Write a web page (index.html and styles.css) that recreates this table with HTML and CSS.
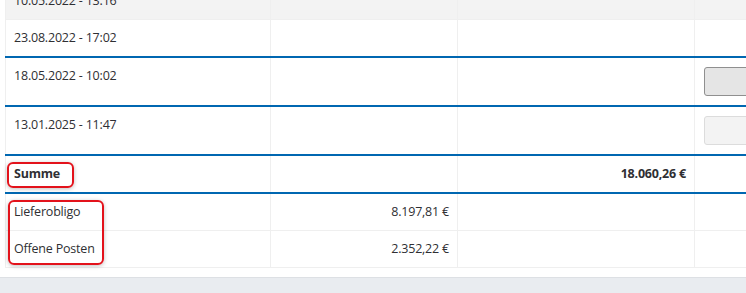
FILE: index.html
```html
<!DOCTYPE html>
<html lang="de">
<head>
    <meta charset="UTF-8">
    <meta name="viewport" content="width=device-width, initial-scale=1.0">
    <title>Bestellungen</title>
    <link rel="stylesheet" href="styles.css">
</head>
<body>
    <div class="panel">
        <table class="orders">
            <colgroup>
                <col class="col-date">
                <col class="col-amount">
                <col class="col-sum">
                <col class="col-action">
            </colgroup>
            <tr class="row-muted">
                <td>10.05.2022 - 13:16</td>
                <td></td>
                <td></td>
                <td></td>
            </tr>
            <tr class="row-group">
                <td>23.08.2022 - 17:02</td>
                <td></td>
                <td></td>
                <td></td>
            </tr>
            <tr class="row-group">
                <td>18.05.2022 - 10:02</td>
                <td></td>
                <td></td>
                <td><button class="btn">&nbsp;</button></td>
            </tr>
            <tr class="row-group">
                <td>13.01.2025 - 11:47</td>
                <td></td>
                <td></td>
                <td><button class="btn" disabled>&nbsp;</button></td>
            </tr>
            <tr class="row-group row-total">
                <td>Summe</td>
                <td></td>
                <td class="num">18.060,26 €</td>
                <td></td>
            </tr>
            <tr>
                <td>Lieferobligo</td>
                <td class="num">8.197,81 €</td>
                <td></td>
                <td></td>
            </tr>
            <tr>
                <td>Offene Posten</td>
                <td class="num">2.352,22 €</td>
                <td></td>
                <td></td>
            </tr>
        </table>

        <!-- markierungen -->
        <div class="mark mark-total"></div>
        <div class="mark mark-open"></div>
    </div>
    <div class="footer"></div>
</body>
</html>
```

FILE: styles.css
```css
body {
    margin: 0;
    font-family: "Open Sans", Lato, sans-serif;
    font-size: 12.5px;
    color: #2f2f33;
    background-color: #fff;
    overflow: hidden;
}
.panel {
    position: relative;
    padding: 0 0 9px 5px;
    overflow: hidden;
}
.orders {
    width: 900px;
    margin-top: -18px;
    border-collapse: collapse;
    table-layout: fixed;
}
.col-date {
    width: 265px;
}
.col-amount {
    width: 187px;
}
.col-sum {
    width: 237px;
}
.orders td {
    padding: 9px 8px;
    line-height: 18px;
    vertical-align: top;
    border: 1px solid #efefef;
    white-space: nowrap;
    letter-spacing: -0.2px;
}
.row-muted td {
    background-color: #f3f3f3;
}
.row-group td {
    border-bottom: 2px solid #0067b1;
}
.row-total td {
    font-weight: bold;
}
.row-total + tr td {
    border-top: 2px solid #0067b1;
}
.num {
    text-align: right;
}
.btn {
    display: block;
    width: 110px;
    height: 29px;
    margin-left: 1px;
    background-color: #e5e5e5;
    border: 1px solid #8f8f8f;
    border-radius: 3px;
}
.btn:disabled {
    background-color: #f3f3f3;
    border-color: #dcdcdc;
}
.mark {
    position: absolute;
    border: 2px solid #e3121b;
    border-radius: 6px;
    box-shadow: 0 1px 4px rgba(0, 0, 0, 0.25);
    box-sizing: border-box;
}
.mark-total {
    left: 7px;
    top: 162px;
    width: 67px;
    height: 26px;
}
.mark-open {
    left: 8px;
    top: 200px;
    width: 96px;
    height: 65px;
}
.footer {
    height: 40px;
    background-color: #e9ecf0;
    border-top: 1px solid #dde0e4;
}
```
